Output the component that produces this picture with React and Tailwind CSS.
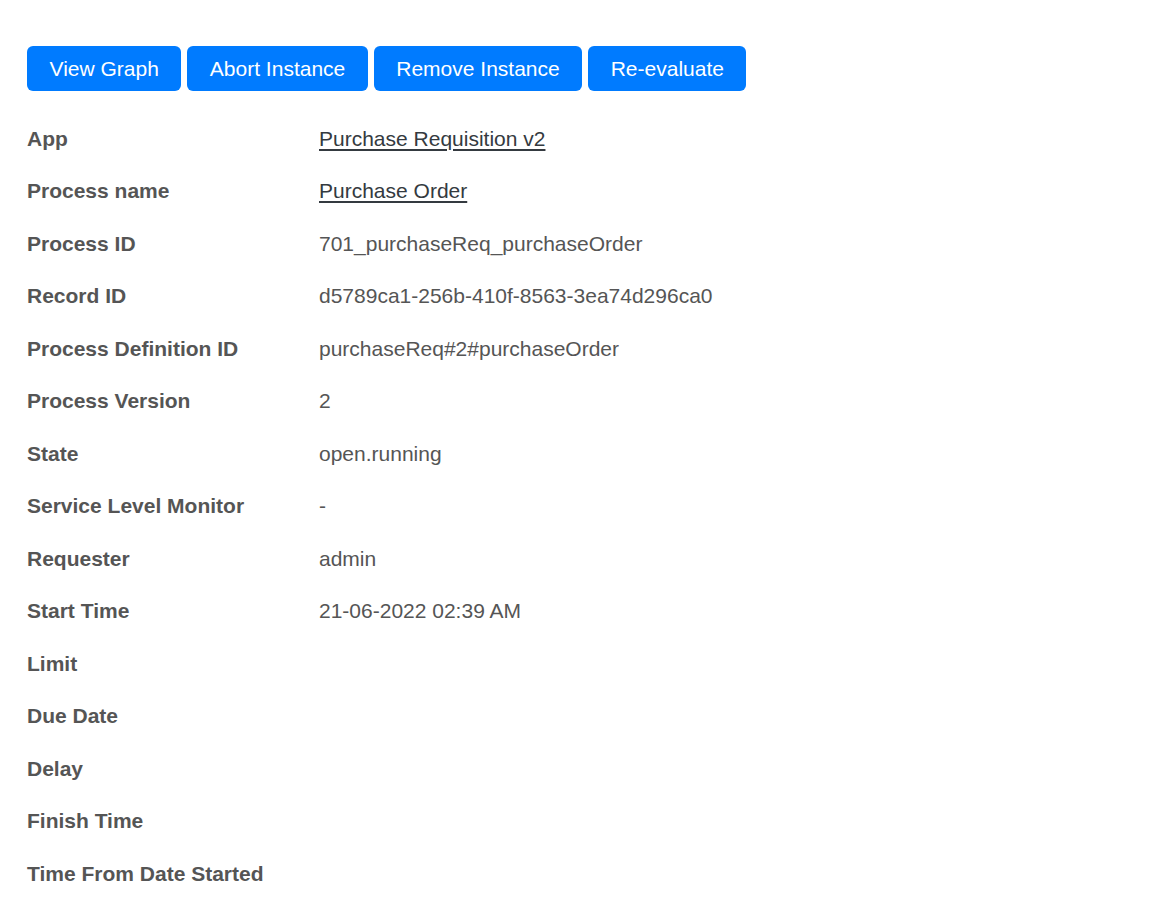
const ROWS = [
  { label: 'App', value: 'Purchase Requisition v2', link: true },
  { label: 'Process name', value: 'Purchase Order', link: true },
  { label: 'Process ID', value: '701_purchaseReq_purchaseOrder' },
  { label: 'Record ID', value: 'd5789ca1-256b-410f-8563-3ea74d296ca0' },
  { label: 'Process Definition ID', value: 'purchaseReq#2#purchaseOrder' },
  { label: 'Process Version', value: '2' },
  { label: 'State', value: 'open.running' },
  { label: 'Service Level Monitor', value: '-' },
  { label: 'Requester', value: 'admin' },
  { label: 'Start Time', value: '21-06-2022 02:39 AM' },
  { label: 'Limit', value: '' },
  { label: 'Due Date', value: '' },
  { label: 'Delay', value: '' },
  { label: 'Finish Time', value: '' },
  { label: 'Time From Date Started', value: '' },
];

const BUTTONS = ['View Graph', 'Abort Instance', 'Remove Instance', 'Re-evaluate'];

export default function App() {
  return (
    <div className="min-h-screen bg-white pl-[27px] pt-[46px] font-['Liberation_Sans',Arial,sans-serif] text-[21px]">
      <div className="flex gap-[6px]">
        {BUTTONS.map((b) => (
          <button
            key={b}
            type="button"
            className="h-[45px] px-[22.5px] rounded-[6px] bg-[#007bff] text-white leading-none"
          >
            {b}
          </button>
        ))}
      </div>
      <div className="mt-[21px]">
        {ROWS.map((r) => (
          <div key={r.label} className="flex items-center h-[52.5px]">
            <div className="w-[292px] shrink-0 font-bold text-[#555]">{r.label}</div>
            <div className="text-[#555]">
              {r.link ? (
                <a href="#" className="text-[#343a40] underline underline-offset-[3px]">
                  {r.value}
                </a>
              ) : (
                r.value
              )}
            </div>
          </div>
        ))}
      </div>
    </div>
  );
}
